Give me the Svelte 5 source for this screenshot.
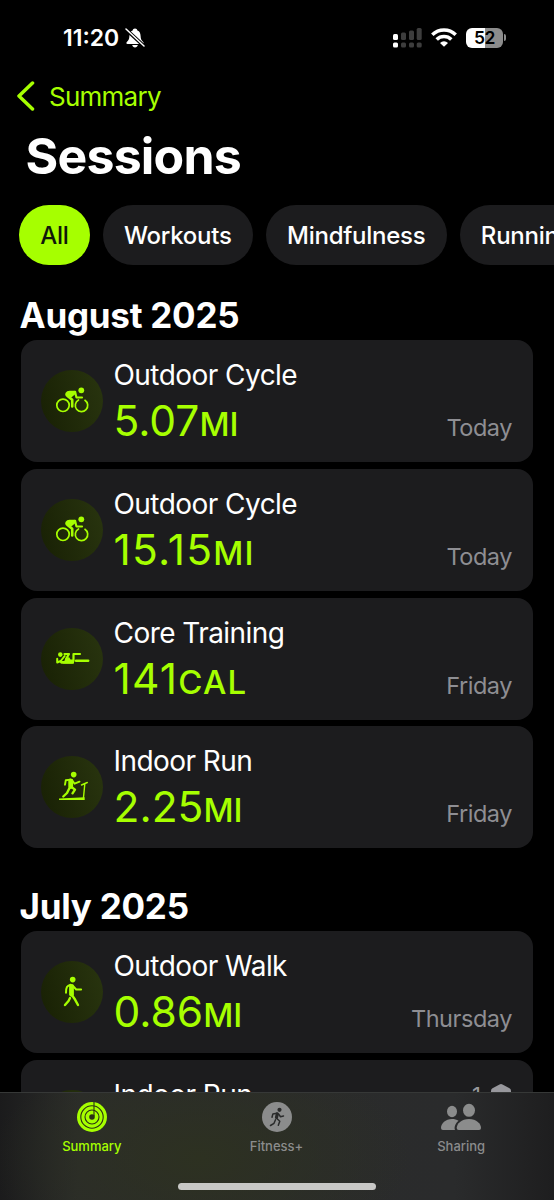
<script>
  let filters = ['All', 'Workouts', 'Mindfulness', 'Running'];
  let active = 'All';
  let tab = 'Summary';

  let months = [
    {
      name: 'August 2025',
      sessions: [
        { type: 'cycle', title: 'Outdoor Cycle', value: '5.07', unit: 'MI', date: 'Today' },
        { type: 'cycle', title: 'Outdoor Cycle', value: '15.15', unit: 'MI', date: 'Today' },
        { type: 'core', title: 'Core Training', value: '141', unit: 'CAL', date: 'Friday' },
        { type: 'treadmill', title: 'Indoor Run', value: '2.25', unit: 'MI', date: 'Friday' }
      ]
    },
    {
      name: 'July 2025',
      sessions: [
        { type: 'walk', title: 'Outdoor Walk', value: '0.86', unit: 'MI', date: 'Thursday' },
        { type: 'treadmill', title: 'Indoor Run', awards: 1 }
      ]
    }
  ];
</script>

<div class="screen">
  <header class="status">
    <div class="clock">
      <span>11:20</span>
      <svg class="bell" viewBox="0 0 20 20">
        <path d="M10 .5c-1.300 0-2.200.8-2.400 2C5.300 3.300 4.500 5.500 4.400 8c-.1 3-.8 4.300-2.600 6-.8.8-.5 1.900.7 1.900h15c1.200 0 1.500-1.100.7-1.900-1.800-1.700-2.500-3-2.600-6-.1-2.500-.9-4.700-3.200-5.500-.2-1.200-1.100-2-2.400-2z" />
        <path d="M7.200 17h5.600c-.3 1.500-1.400 2.500-2.800 2.500S7.500 18.500 7.200 17z" />
        <path d="M.5 1 19.500 18.500" stroke="#000" stroke-width="3.600" />
        <path d="M1 1 19 18" stroke="#fff" stroke-width="1.500" stroke-linecap="round" />
      </svg>
    </div>
    <div class="indicators">
      <svg class="signal" viewBox="0 0 29 20">
        <g fill="#fff">
          <rect x="0" y="6" width="5" height="6" rx="1.500" />
          <rect x="0" y="14.500" width="5" height="5" rx="1.500" />
        </g>
        <g fill="#3d3d3d">
          <rect x="8" y="4.500" width="5" height="7.500" rx="1.500" />
          <rect x="16" y="2.500" width="5" height="9.500" rx="1.500" />
          <rect x="23.700" y="0" width="5" height="12" rx="1.500" />
          <rect x="8" y="14.500" width="5" height="5" rx="1.500" />
          <rect x="16" y="14.500" width="5" height="5" rx="1.500" />
          <rect x="23.700" y="14.500" width="5" height="5" rx="1.500" />
        </g>
      </svg>
      <svg class="wifi" viewBox="0 0 26 19">
        <g fill="none" stroke="#fff" stroke-width="3.500">
          <path d="M1.300 6.700a16.800 16.800 0 0 1 23.400 0" />
          <path d="M5.700 11.400a10.400 10.400 0 0 1 14.600 0" />
        </g>
        <path fill="#fff" d="M13 18.800 9 14.900a5.800 5.800 0 0 1 8 0z" />
      </svg>
      <div class="battery"><div class="level">52</div><i></i></div>
    </div>
  </header>

  <nav class="back">
    <svg viewBox="0 0 20 30"><path d="M16.500 2 3 15l13.500 13" /></svg>
    <span>Summary</span>
  </nav>
  <h1>Sessions</h1>

  <div class="filters">
    {#each filters as filter}
      <button class:active={filter === active} on:click={() => (active = filter)}>{filter}</button>
    {/each}
  </div>

  {#each months as month}
    <section>
      <h2>{month.name}</h2>
      {#each month.sessions as session}
        <article>
          <div class="badge">
            <svg viewBox="0 0 62 62">
              {#if session.type === 'cycle'}
                <circle class="line" cx="22" cy="35.300" r="6.200" stroke-width="1.700" />
                <path class="line" d="M37.500 30A6.200 6.200 0 1 0 44 30.300" stroke-width="1.700" />
                <circle cx="40.300" cy="20.300" r="2.900" />
                <path class="line" d="M28 23.300 34 22l1.500 5.500H41" stroke-width="2.200" />
                <path class="line" d="M34 22h-5.500c-2.500 0-4 2.500-2 4l4.700 3.700V36.500" stroke-width="2.600" />
                <path d="M26 23.500 34 20.800l1.300 2.400-5.300 4.500-4-2z" />
              {:else if session.type === 'core'}
                <circle cx="19.300" cy="26.600" r="2.300" />
                <path class="line" d="M16.200 30.800v3.700l3.500-1.500 4-5" stroke-width="2" />
                <path class="line" d="M20.500 34.300h11" stroke-width="2.800" />
                <path d="M24 31.500 28 29l1.500 2.500H33v4H22z" />
                <path class="line" d="M23.500 26h4.500L25 31M32.500 33v-7H39" stroke-width="2.200" />
                <path class="line" d="M35 32.700h12.200" stroke-width="2.400" />
              {:else if session.type === 'treadmill'}
                <circle cx="32.700" cy="18.600" r="2.800" />
                <path class="line" d="M29.700 25v5.500" stroke-width="4.800" />
                <path class="line" d="M29.500 23.600l-4.700.6-.8 4.500M31 24l2.600 3.700 4.900-2" stroke-width="1.900" />
                <path class="line" d="M29.800 30.500 34 33.600l-2.500 3.700M28.500 32 26 37l-3.700 3.500" stroke-width="2.400" />
                <path class="line" d="M42.500 41.500 43.800 28M40.500 29l5.800-2.500" stroke-width="1.400" />
                <path d="M18 42.400 43.700 41.300v2.700H18z" />
              {:else}
                <circle cx="31.700" cy="18.600" r="2.800" />
                <path class="line" d="M30.500 25.300v8" stroke-width="4.800" />
                <path class="line" d="M29.500 23.800c-3.500 1-4.500 2.500-4.500 8M31.500 24.500l3.700 4h4.900" stroke-width="2" />
                <path class="line" d="M30.500 33.500l3 4.200 3.500 6.300M29 37l-1.500 3-3.500 4" stroke-width="2.400" />
              {/if}
            </svg>
          </div>
          <div class="info">
            <h3>{session.title}</h3>
            {#if session.value}
              <p class="value" class:loose={session.value.includes('1')}>{session.value}<small>{session.unit}</small></p>
            {/if}
          </div>
          {#if session.date}
            <time>{session.date}</time>
          {:else}
            <div class="awards">
              <span>{session.awards}</span>
              <svg viewBox="0 0 20 22"><path d="M8.500.5 1.500 4.300Q0 5 0 7v8q0 2 1.500 2.800l7 3.700q1.500.8 3 0l7-3.700Q20 17 20 15V7q0-2-1.500-2.700L11.500.5q-1.500-.8-3 0z" /></svg>
            </div>
          {/if}
        </article>
      {/each}
    </section>
  {/each}

  <footer>
    <button class="tab" class:selected={tab === 'Summary'} on:click={() => (tab = 'Summary')}>
      <svg viewBox="0 0 30 30" width="30" height="30">
        <circle cx="15" cy="15" r="15" />
        <g fill="none" stroke="#2b3115" stroke-width="1.100">
          <circle cx="15" cy="15" r="11.200" />
          <circle cx="15" cy="15" r="7" />
          <path d="M17 0v14" />
        </g>
        <circle cx="15" cy="15" r="2.800" fill="#2b3115" />
      </svg>
      <span>Summary</span>
    </button>
    <button class="tab" class:selected={tab === 'Fitness+'} on:click={() => (tab = 'Fitness+')}>
      <svg viewBox="0 0 30 30" width="30" height="30">
        <circle cx="15" cy="15" r="15" />
        <circle cx="17.500" cy="7.800" r="2.100" fill="#2a2b2b" />
        <g fill="none" stroke="#2a2b2b" stroke-width="1.500" stroke-linecap="round" stroke-linejoin="round">
          <path d="M15.300 11.800 14.500 15.500" stroke-width="3.200" />
          <path d="M14.800 11.200l-3.900.7-.9 3.400M16.500 12l2 2.700 3-.7" />
          <path d="M14.800 16.500l3 2.700-1.500 4M13.500 17.800l-1.500 3.500-3.500 2.200" />
        </g>
      </svg>
      <span>Fitness+</span>
    </button>
    <button class="tab" class:selected={tab === 'Sharing'} on:click={() => (tab = 'Sharing')}>
      <svg viewBox="0 0 40 30" width="40" height="30">
        <ellipse cx="11" cy="9.500" rx="5" ry="5.700" />
        <ellipse cx="28" cy="8.300" rx="6" ry="6.500" />
        <path d="M17.500 18.700C15.700 17.500 13.500 17 11 17 4.500 17 0 21.500 0 26q0 2 2 2h12c-1.200-3 .5-7 3.500-9.300z" />
        <path d="M28 17c7.500 0 12 4.700 12 9q0 2-2 2H17.700q-2 0-2-2c0-4.300 4.800-9 12.300-9z" />
      </svg>
      <span>Sharing</span>
    </button>
    <div class="home"></div>
  </footer>
</div>

<style>
  :global(body) {
    background: #000;
  }

  .screen {
    position: relative;
    width: 554px;
    height: 1200px;
    overflow: hidden;
    background: #000;
    color: #fff;
    font-family: Inter, 'Liberation Sans', sans-serif;
  }

  h1, h2, h3, p {
    margin: 0;
  }

  button {
    border: 0;
    font-family: inherit;
  }

  .status {
    display: flex;
    justify-content: space-between;
    align-items: center;
    height: 76px;
    box-sizing: border-box;
    padding: 0 48px 0 63px;
  }

  .clock {
    display: flex;
    align-items: center;
    gap: 6px;
    font-size: 23px;
    font-weight: 600;
    letter-spacing: 0;
  }

  .bell {
    width: 20px;
    height: 20px;
    fill: #fff;
  }

  .indicators {
    display: flex;
    align-items: center;
  }

  .signal {
    width: 29px;
    height: 20px;
    margin-right: 9px;
  }

  .wifi {
    width: 26px;
    height: 19px;
    margin: -1px 9px 0 0;
  }

  .battery {
    display: flex;
    align-items: center;
    gap: 1px;
    margin-top: -1px;
  }

  .level {
    width: 37px;
    height: 20px;
    border-radius: 6px;
    background: linear-gradient(90deg, #fff 52%, #8c8c8c 52%);
    color: #000;
    font-size: 17.5px;
    font-weight: 600;
    line-height: 20px;
    letter-spacing: -0.5px;
    text-align: center;
  }

  .battery i {
    width: 2px;
    height: 7px;
    border-radius: 0 2px 2px 0;
    background: #8c8c8c;
  }

  .back {
    display: flex;
    align-items: center;
    gap: 13px;
    height: 40px;
    padding-left: 16px;
    color: #a6ff00;
    font-size: 26px;
    letter-spacing: -0.75px;
  }

  .back svg {
    width: 20px;
    height: 30px;
    fill: none;
    stroke: #a6ff00;
    stroke-width: 3.5;
    stroke-linecap: round;
    stroke-linejoin: round;
  }

  h1 {
    height: 89px;
    padding-left: 25.500px;
    font-size: 50px;
    font-weight: 700;
    line-height: 81px;
    letter-spacing: -0.8px;
  }

  .filters {
    display: flex;
    gap: 13px;
    width: max-content;
    padding-left: 19px;
  }

  .filters button {
    height: 60px;
    padding: 0 21.200px;
    border-radius: 30px;
    background: #1c1c1e;
    color: #fff;
    font-size: 24px;
    font-weight: 500;
    letter-spacing: -0.25px;
  }

  .filters button.active {
    background: #a6ff00;
    color: #10180a;
  }

  section {
    display: flex;
    flex-direction: column;
    gap: 6.800px;
    padding: 30px 21px 0 21px;
  }

  section + section {
    padding-top: 38px;
  }

  h2 {
    height: 38.200px;
    margin-left: -1.500px;
    font-size: 35px;
    font-weight: 700;
    line-height: 41px;
    letter-spacing: -0.25px;
  }

  article {
    display: flex;
    height: 122px;
    box-sizing: border-box;
    padding: 0 21px 0 20px;
    border-radius: 16px;
    background: #1c1c1e;
  }

  .badge {
    width: 62px;
    height: 62px;
    margin: 30px 10.500px 0 0;
    border-radius: 50%;
    background: linear-gradient(75deg, #182004, #29350f);
  }

  .badge svg {
    display: block;
    fill: #a6ff00;
  }

  .line {
    fill: none;
    stroke: #a6ff00;
    stroke-linecap: round;
    stroke-linejoin: round;
  }

  .info {
    flex: 1;
    padding-top: 15px;
  }

  h3 {
    font-size: 28px;
    font-weight: 400;
    line-height: 40px;
    letter-spacing: -0.55px;
  }

  .value {
    color: #a6ff00;
    font-size: 42.500px;
    line-height: 52px;
  }

  .value.loose {
    letter-spacing: 1.2px;
  }

  .value small {
    font-size: 33px;
    font-weight: 500;
  }

  time {
    align-self: flex-end;
    color: #8e8e93;
    font-size: 23.500px;
    line-height: 30px;
    letter-spacing: -0.45px;
    padding-bottom: 19px;
  }

  .awards {
    display: flex;
    gap: 10px;
    height: 22px;
    margin: 24px 1px 0 0;
    color: #98989d;
    font-size: 22px;
    line-height: 22px;
  }

  .awards svg {
    width: 20px;
    height: 22px;
    fill: #98989d;
  }

  footer {
    position: absolute;
    inset: auto 0 0 0;
    display: flex;
    height: 108px;
    box-sizing: border-box;
    border-top: 1px solid #363837;
    background:
      radial-gradient(ellipse 210px 110px at 200px 65px, #2d3121, transparent),
      linear-gradient(90deg, #1b1b1c, #2b2c2a 14%, #2a2b2c 82%, #1e1e1f);
  }

  .tab {
    display: flex;
    flex: 1;
    flex-direction: column;
    align-items: center;
    padding: 9px 1px 0 0;
    background: none;
    color: #8b8c8c;
    fill: #8b8c8c;
    font-size: 13px;
    font-weight: 500;
  }

  .tab span {
    margin-top: 6px;
    line-height: 16px;
  }

  .tab.selected {
    color: #a6ff00;
    fill: #a6ff00;
  }

  .home {
    position: absolute;
    bottom: 10px;
    left: 178px;
    width: 198px;
    height: 7px;
    border-radius: 4px;
    background: #c8c8c6;
  }
</style>
